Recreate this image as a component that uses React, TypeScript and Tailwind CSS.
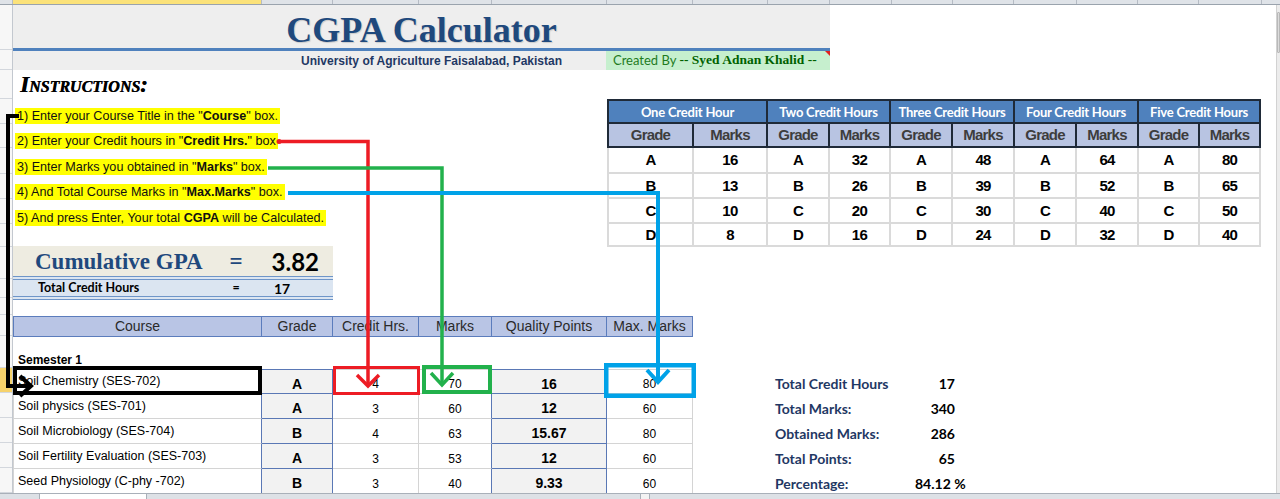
import React from "react";

const arial = "font-['Liberation_Sans',Arial,sans-serif]";
const lato = "font-['Lato','Open_Sans',sans-serif]";
const serif = "font-['Liberation_Serif','Times_New_Roman',serif]";

const colHeaderCells = [
  "w-[249px] bg-[#fbe27a]",
  "w-[71px]",
  "w-[86px]",
  "w-[73px]",
  "w-[115px]",
  "w-[86px]",
  "w-[75px]",
  "w-[62px]",
  "w-[62px]",
  "w-[61px]",
  "w-[61px]",
  "w-[63px]",
  "w-[61px]",
  "w-[61px]",
  "w-[63px]",
];

// row header heights, from y=5 down to the sheet tabs
const rowHeaderRows = [
  "h-[45px]", "h-[20px]", "h-[29px]", "h-[25px]", "h-[24px]", "h-[26px]", "h-[25px]",
  "h-[25px]", "h-[23px]", "h-[32px]", "h-[19px]", "h-[17px]", "h-[21px]", "h-[32px]",
  "h-[25px] bg-[#f6d26b]", "h-[25px]", "h-[25px]", "h-[25px]", "h-[25px]",
];

const creditGroups = [
  { title: "One Credit Hour", marks: [16, 13, 10, 8] },
  { title: "Two Credit Hours", marks: [32, 26, 20, 16] },
  { title: "Three Credit Hours", marks: [48, 39, 30, 24] },
  { title: "Four Credit Hours", marks: [64, 52, 40, 32] },
  { title: "Five Credit Hours", marks: [80, 65, 50, 40] },
];
const grades = ["A", "B", "C", "D"];
const gradeRowHeights = ["h-[26px]", "h-[25px]", "h-[25px]", "h-[23px]"];
const gradeCols = [
  "w-[87px]", "w-[74px]", "w-[62px]", "w-[61px]", "w-[62px]",
  "w-[62px]", "w-[62px]", "w-[62px]", "w-[61px]", "w-[61px]",
];

const courses = [
  { name: "Soil Chemistry (SES-702)", grade: "A", hrs: 4, marks: 70, qp: "16", max: 80 },
  { name: "Soil physics (SES-701)", grade: "A", hrs: 3, marks: 60, qp: "12", max: 60 },
  { name: "Soil Microbiology (SES-704)", grade: "B", hrs: 4, marks: 63, qp: "15.67", max: 80 },
  { name: "Soil Fertility Evaluation (SES-703)", grade: "A", hrs: 3, marks: 53, qp: "12", max: 60 },
  { name: "Seed Physiology (C-phy -702)", grade: "B", hrs: 3, marks: 40, qp: "9.33", max: 60 },
];

const summary = [
  { label: "Total Credit Hours", value: "17" },
  { label: "Total Marks:", value: "340" },
  { label: "Obtained Marks:", value: "286" },
  { label: "Total Points:", value: "65" },
  { label: "Percentage:", value: "84.12 %" },
];

function ColumnHeaders() {
  return (
    <div className="flex h-[5px] shrink-0 border-b border-[#9aa3ad] bg-[#dfe3e8]">
      <div className="w-[13px] border-r border-[#b5bbc4]" />
      {colHeaderCells.map((c, i) => (
        <div key={i} className={`${c} border-r border-[#b5bbc4]`} />
      ))}
    </div>
  );
}

function RowHeaders() {
  return (
    <div className="flex w-[13px] shrink-0 flex-col border-r border-[#c3c8cf] bg-[#f7f7f7]">
      {rowHeaderRows.map((c, i) => (
        <div key={i} className={`${c} shrink-0 border-b border-[#d3d7dd]`} />
      ))}
    </div>
  );
}

function Banner() {
  return (
    <div className="w-[817px] bg-[#eeeeee]">
      <div className="h-[43px] pt-[7px] text-center">
        <h1
          className={`${serif} text-[36px] leading-[36px] font-bold text-[#1f497d] [text-shadow:1px_1px_1px_rgba(0,0,0,0.15)]`}
        >
          CGPA Calculator
        </h1>
      </div>
      <div className="h-[3px] bg-[#4f81bd]" />
      <div className="flex h-[19px] items-center">
        <div className={`${arial} w-[593px] pr-[44px] text-right text-[12px] font-bold text-[#1f3864]`}>
          University of Agriculture Faisalabad, Pakistan
        </div>
        <div className="relative flex h-full flex-1 items-center bg-[#c6efce] pl-[7px]">
          <span className={`${lato} text-[13px] text-[#1e7b1e]`}>Created By&nbsp;</span>
          <span className={`${serif} text-[13.5px] font-bold text-[#006100]`}>-- Syed Adnan Khalid --</span>
          <span className="absolute top-0 right-0 h-0 w-0 border-t-[5px] border-l-[5px] border-t-[#e02020] border-l-transparent" />
        </div>
      </div>
    </div>
  );
}

function Instructions() {
  const lines: React.ReactNode[] = [
    <>1) Enter your Course Title in the "<b>Course</b>" box.</>,
    <>2) Enter your Credit hours in "<b>Credit Hrs.</b>" box</>,
    <>3) Enter Marks you obtained in "<b>Marks</b>" box.</>,
    <>4) And Total Course Marks in "<b>Max.Marks</b>" box.</>,
    <>5) And press Enter, Your total <b>CGPA</b> will be Calculated.</>,
  ];
  return (
    <div>
      <div className="h-[33px] pt-[4px] pl-[7px]">
        <span
          className={`${serif} text-[23px] leading-[22px] font-bold italic text-black [font-variant:small-caps] [text-shadow:0.5px_0_0_#000]`}
        >
          Instructions:
        </span>
      </div>
      {lines.map((line, i) => (
        <div key={i} className="flex h-[25.5px] items-center pl-[2px]">
          <span className={`${arial} inline-block h-[16px] bg-[#ffff00] px-[2px] text-[12.6px] leading-[16px] text-[#111]`}>
            {line}
          </span>
        </div>
      ))}
    </div>
  );
}

function GpaBox() {
  return (
    <div className="mt-[15.5px] w-[320px]">
      <div className="flex h-[30px] items-center bg-[#eeece1] pt-[2px]">
        <span className={`${serif} w-[208px] pl-[22px] text-[23px] font-bold text-[#1f497d]`}>Cumulative GPA</span>
        <span className={`${serif} w-[30px] text-center text-[23px] font-bold text-[#1f497d]`}>=</span>
        <span className={`${lato} flex-1 pr-[14px] text-right text-[24px] font-bold text-black`}>3.82</span>
      </div>
      <div className="flex h-[24px] items-center border-y-[4px] border-double border-[#6e95c8] bg-[#dbe5f1]">
        <span className={`${lato} w-[208px] pl-[25px] text-[12.5px] font-bold text-black`}>Total Credit Hours</span>
        <span className={`${lato} w-[30px] text-center text-[12.5px] font-bold text-black`}>=</span>
        <span className={`${lato} w-[62px] text-center text-[14px] font-bold text-black`}>17</span>
      </div>
    </div>
  );
}

function GradeTable() {
  return (
    <table className={`${arial} mt-[29px] w-[654px] table-fixed self-start border-separate border-spacing-0 leading-[16px]`}>
      <colgroup>
        {gradeCols.map((c, i) => (
          <col key={i} className={c} />
        ))}
      </colgroup>
      <thead>
        <tr className="h-[25px]">
          {creditGroups.map((g, i) => (
            <th
              key={g.title}
              colSpan={2}
              className={`${lato} ${i === 0 ? "border-l-2" : ""} border-t-2 border-r-2 border-b-2 border-[#1f2a38] bg-[#4f81bd] p-0 text-[13px] font-bold tracking-[-0.2px] text-white`}
            >
              {g.title}
            </th>
          ))}
        </tr>
        <tr className="h-[24px]">
          {creditGroups.map((g, i) => (
            <React.Fragment key={g.title}>
              <th className={`${i === 0 ? "border-l-2" : ""} border-r-2 border-b-2 border-[#1f2a38] bg-[#b8c4e2] p-0 text-[15px] font-bold tracking-[-0.8px] text-[#3d3d3d]`}>
                Grade
              </th>
              <th className="border-r-2 border-b-2 border-[#1f2a38] bg-[#b8c4e2] p-0 text-[15px] font-bold tracking-[-0.8px] text-[#3d3d3d]">
                Marks
              </th>
            </React.Fragment>
          ))}
        </tr>
      </thead>
      <tbody>
        {grades.map((gr, r) => (
          <tr key={gr} className={gradeRowHeights[r]}>
            {creditGroups.map((g, i) => (
              <React.Fragment key={g.title}>
                <td className={`${i === 0 ? "border-l-2" : ""} border-r-2 border-b-2 border-[#dadada] p-0 text-center text-[15px] font-bold tracking-[-0.7px] text-black`}>
                  {gr}
                </td>
                <td className="border-r-2 border-b-2 border-[#dadada] p-0 text-center text-[15px] font-bold tracking-[-0.7px] text-black">
                  {g.marks[r]}
                </td>
              </React.Fragment>
            ))}
          </tr>
        ))}
      </tbody>
    </table>
  );
}

function CourseTable() {
  const head = ["Course", "Grade", "Credit Hrs.", "Marks", "Quality Points", "Max. Marks"];
  const widths = ["w-[249px]", "w-[71px]", "w-[86px]", "w-[73px]", "w-[115px]", "w-[86px]"];
  const gray = "border-[#d4d4d4]";
  const blue = "border-[#5a78b5]";
  return (
    <table className={`${arial} w-[680px] table-fixed self-start border-separate border-spacing-0 leading-[16px]`}>
      <colgroup>
        {widths.map((w, i) => (
          <col key={i} className={w} />
        ))}
      </colgroup>
      <thead>
        <tr className="h-[21px]">
          {head.map((h, i) => (
            <th
              key={h}
              className={`${i === 0 ? "border-l" : ""} border-t border-r border-b border-[#5b7cbc] bg-[#b9c5e5] p-0 text-[14px] leading-[18px] font-normal text-[#2a2a2a]`}
            >
              {h}
            </th>
          ))}
        </tr>
      </thead>
      <tbody>
        <tr className="h-[32px]">
          <td colSpan={6} className="p-0 pb-[1px] pl-[5px] align-bottom text-[12px] font-bold text-black">
            Semester 1
          </td>
        </tr>
        {courses.map((c, r) => {
          const top = r === 0 ? "border-t" : "";
          return (
            <tr key={c.name} className="h-[25px]">
              <td className={`${top} border-l border-r border-b ${gray} border-r-[#5a78b5] p-0 pl-[4px] text-[12.5px] text-black`}>
                {c.name}
              </td>
              <td className={`${top} border-r border-b ${blue} bg-[#f2f2f2] p-0 pt-[5px] text-center text-[14px] font-bold text-black`}>
                {c.grade}
              </td>
              <td className={`${top} border-r border-b ${gray} p-0 pt-[6px] text-center text-[12px] text-black`}>{c.hrs}</td>
              <td className={`${top} border-r border-b ${gray} border-r-[#5a78b5] p-0 pt-[6px] text-center text-[12px] text-black`}>
                {c.marks}
              </td>
              <td className={`${top} border-r border-b ${blue} bg-[#f2f2f2] p-0 pt-[5px] text-center text-[14px] font-bold text-black`}>
                {c.qp}
              </td>
              <td className={`${top} border-r border-b ${gray} p-0 pt-[6px] text-center text-[12px] text-black`}>{c.max}</td>
            </tr>
          );
        })}
      </tbody>
    </table>
  );
}

function Summary() {
  return (
    <div className={`${lato} ml-[82px] w-[200px] pt-[55.5px]`}>
      {summary.map((s) => (
        <div key={s.label} className="flex h-[25px] items-center">
          <span className="w-[140px] text-[14px] font-bold text-[#1f3864]">{s.label}</span>
          <span className={`w-[40px] text-right text-[14px] font-bold whitespace-nowrap text-black ${s.value.includes("%") ? "-mr-[15px]" : ""}`}>
            {s.value}
          </span>
        </div>
      ))}
    </div>
  );
}

function Scrollbar() {
  return (
    <div className="flex w-[4px] shrink-0 flex-col border-l border-[#d2d2d2] bg-[#ececec]">
      <div className="h-[7px] shrink-0" />
      <div className="h-[41px] shrink-0 rounded-[1px] border border-[#b9b9b9] bg-[#dcdcdc]" />
    </div>
  );
}

function SheetTabs() {
  return (
    <div className="flex h-[6px] shrink-0 border-t border-[#a9b0b9] bg-[#dde1e6]">
      <div className="w-[40px] border-r border-[#a9b0b9]" />
      <div className="w-[107px] border-r border-[#a9b0b9] bg-white" />
      <div className="w-[493px]" />
      <div className="w-[10px] border-x border-[#a9b0b9] bg-[#f3f3f3]" />
    </div>
  );
}

function Arrows() {
  return (
    <svg className="pointer-events-none absolute top-0 left-0" width={1280} height={499} viewBox="0 0 1280 499" fill="none">
      {/* black: course title */}
      <rect x={15} y={368} width={245} height={25} stroke="#000" strokeWidth={4} />
      <path d="M19 116 H8 V386 H30" stroke="#000" strokeWidth={4} />
      <path d="M20 376 L31 386 L20 396" stroke="#000" strokeWidth={4} />

      {/* red: credit hrs */}
      <rect x={334.5} y={367.5} width={84} height={26} stroke="#ed1c24" strokeWidth={3} />
      <circle cx={279} cy={141.5} r={2.5} fill="#ed1c24" />
      <path d="M280 141.5 H368 V386" stroke="#ed1c24" strokeWidth={3.5} />
      <path d="M357 375 L368 386 L379 375" stroke="#ed1c24" strokeWidth={3.5} />

      {/* green: marks */}
      <rect x={424} y={367} width={66} height={25} stroke="#22b14c" strokeWidth={4} />
      <path d="M268 168 H442 V385" stroke="#22b14c" strokeWidth={3.5} />
      <path d="M431 373 L442 385 L453 373" stroke="#22b14c" strokeWidth={3.5} />

      {/* blue: max marks */}
      <rect x={606.25} y={365.25} width={87.5} height={30.5} stroke="#00a2e8" strokeWidth={4.5} />
      <path d="M288 193 H658 V382" stroke="#00a2e8" strokeWidth={4} />
      <path d="M647 370 L658 382 L669 370" stroke="#00a2e8" strokeWidth={4} />
    </svg>
  );
}

export default function App() {
  return (
    <div className="relative flex h-[499px] w-[1280px] flex-col overflow-hidden bg-white">
      <ColumnHeaders />
      <div className="flex min-h-0 flex-1">
        <RowHeaders />
        <div className="min-w-0 flex-1 overflow-hidden">
          <Banner />
          <div className="flex">
            <div className="w-[594px] shrink-0">
              <Instructions />
              <GpaBox />
            </div>
            <GradeTable />
          </div>
          <div className="mt-[15.5px] flex">
            <CourseTable />
            <Summary />
          </div>
        </div>
        <Scrollbar />
      </div>
      <SheetTabs />
      <Arrows />
    </div>
  );
}
